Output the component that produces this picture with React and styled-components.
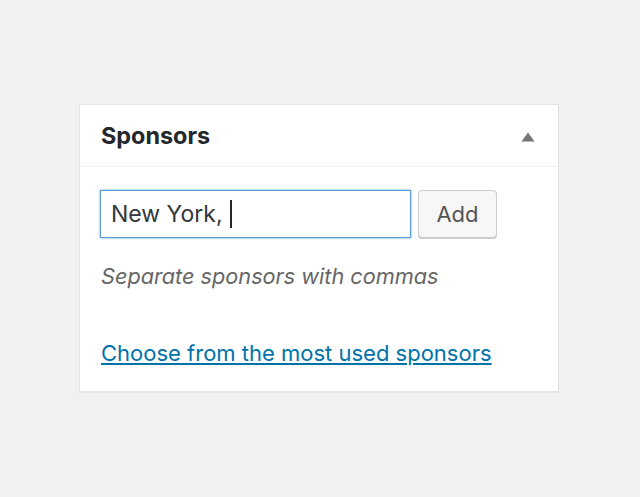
import React from "react";
import styled, { createGlobalStyle } from "styled-components";

const Global = createGlobalStyle`
  html, body { margin: 0; padding: 0; background: #f1f1f1; }
  body { font-family: Inter, "Liberation Sans", Arial, sans-serif; }
`;

const Page = styled.div`
  width: 640px;
  height: 497px;
  padding: 104px 0 0 79px;
  box-sizing: border-box;
`;

const Panel = styled.section`
  width: 480px;
  height: 288px;
  box-sizing: border-box;
  background: #fff;
  border: 1px solid #e5e5e5;
  box-shadow: 0 1px 1px rgba(0, 0, 0, 0.04);
`;

const Header = styled.div`
  height: 61px;
  border-bottom: 1px solid #eee;
  display: flex;
  align-items: center;
  justify-content: space-between;
  padding: 0 23px 0 21px;
`;

const Title = styled.h2`
  margin: 0;
  font-size: 23.4px;
  font-weight: 700;
  color: #23282d;
`;

const Toggle = styled.button`
  border: 0;
  background: none;
  padding: 0;
  margin-top: 3px;
  width: 14px;
  height: 10px;
  display: flex;
  cursor: pointer;
`;

const Body = styled.div`
  padding: 23px 20px 0 20px;
`;

const Row = styled.div`
  display: flex;
  gap: 7px;
  align-items: center;
`;

const Input = styled.div`
  width: 311px;
  height: 48px;
  box-sizing: border-box;
  border: 1px solid #5b9dd9;
  box-shadow: 0 0 2px rgba(30, 140, 190, 0.8);
  display: flex;
  align-items: center;
  padding-left: 10px;
  font-size: 23px;
  color: #32373c;
`;

const Caret = styled.span`
  display: inline-block;
  width: 2px;
  height: 28px;
  background: #23282d;
  margin-left: 7px;
`;

const AddButton = styled.button`
  width: 79px;
  height: 48px;
  box-sizing: border-box;
  border: 1px solid #ccc;
  border-radius: 4px;
  background: #f7f7f7;
  box-shadow: 0 1px 0 #ccc;
  font-family: inherit;
  font-size: 22px;
  color: #555;
  padding: 0;
`;

const Help = styled.p`
  margin: 24px 0 0 1px;
  font-size: 21.7px;
  font-style: italic;
  color: #666;
  line-height: 28px;
`;

const Link = styled.a`
  display: inline-block;
  margin: 49px 0 0 1px;
  font-size: 22px;
  color: #0073aa;
  text-decoration: underline;
  line-height: 28px;
`;

export default function App() {
  return (
    <>
      <Global />
      <Page>
        <Panel>
          <Header>
            <Title>Sponsors</Title>
            <Toggle aria-label="Toggle panel">
              <svg width="14" height="10" viewBox="0 0 14 10">
                <path d="M7 0.5 L13.5 9.5 L0.5 9.5 Z" fill="#72777c" />
              </svg>
            </Toggle>
          </Header>
          <Body>
            <Row>
              <Input>
                New York,<Caret />
              </Input>
              <AddButton>Add</AddButton>
            </Row>
            <Help>Separate sponsors with commas</Help>
            <Link href="#">Choose from the most used sponsors</Link>
          </Body>
        </Panel>
      </Page>
    </>
  );
}
